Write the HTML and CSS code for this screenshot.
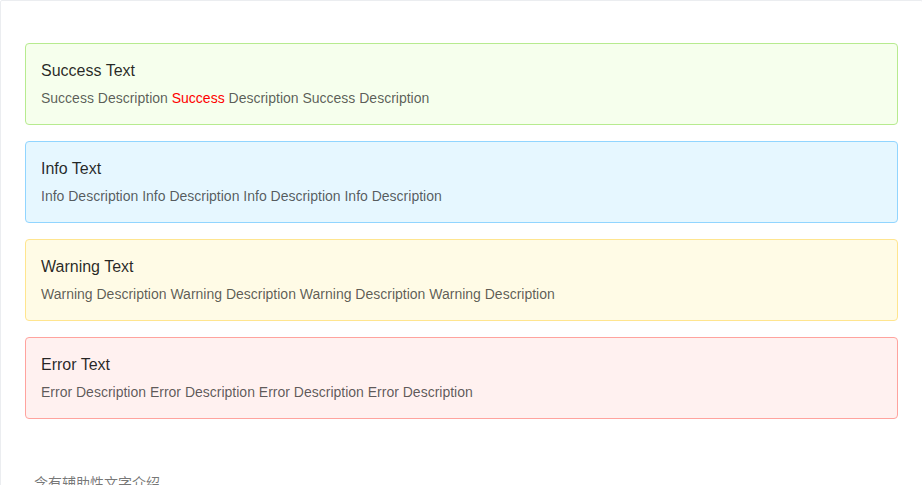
FILE: index.html
```html
<!DOCTYPE html>
<html lang="en">
<head>
<meta charset="utf-8">
<title>Alert</title>
<link rel="stylesheet" href="styles.css">
</head>
<body>
<section class="code-box">
  <div class="demo">
    <div class="alert alert-success">
      <span class="alert-message">Success Text</span>
      <span class="alert-description">Success Description <span class="hl">Success</span> Description Success Description</span>
    </div>
    <div class="alert alert-info">
      <span class="alert-message">Info Text</span>
      <span class="alert-description">Info Description Info Description Info Description Info Description</span>
    </div>
    <div class="alert alert-warning">
      <span class="alert-message">Warning Text</span>
      <span class="alert-description">Warning Description Warning Description Warning Description Warning Description</span>
    </div>
    <div class="alert alert-error">
      <span class="alert-message">Error Text</span>
      <span class="alert-description">Error Description Error Description Error Description Error Description</span>
    </div>
  </div>
  <div class="meta">
    <div class="meta-title">含有辅助性文字介绍</div>
  </div>
</section>
</body>
</html>
```
FILE: styles.css
```css
html, body {
  margin: 0;
  padding: 0;
  overflow: hidden;
  background: #fff;
}
body {
  font-family: "Liberation Sans", Arial, "Noto Sans CJK SC", sans-serif;
  font-size: 14px;
  line-height: 1.5;
  color: rgba(0, 0, 0, 0.65);
}
.code-box {
  width: 923px;
  box-sizing: border-box;
  border: 1px solid #ebedf0;
  border-radius: 2px;
}
.demo {
  padding: 42px 24px 50px;
}
.alert {
  padding: 15px;
  border: 1px solid;
  border-radius: 4px;
  margin-bottom: 16px;
}
.alert-success { background: #f6ffed; border-color: #b7eb8f; }
.alert-info { background: #e6f7ff; border-color: #91d5ff; }
.alert-warning { background: #fffbe6; border-color: #ffe58f; }
.alert-error { background: #fff1f0; border-color: #ffa39e; }
.alert-message {
  display: block;
  font-size: 16px;
  line-height: 24px;
  margin-bottom: 4px;
  color: rgba(0, 0, 0, 0.85);
}
.alert-description {
  display: block;
  font-size: 14px;
  line-height: 22px;
}
.hl { color: #f00; }
.meta {
  position: relative;
  border-top: 1px dashed #ebedf0;
}
.meta-title {
  position: absolute;
  top: -14px;
  left: 25px;
  padding: 1px 8px;
  background: #fff;
  font-size: 14px;
  color: rgba(0, 0, 0, 0.55);
}
```
